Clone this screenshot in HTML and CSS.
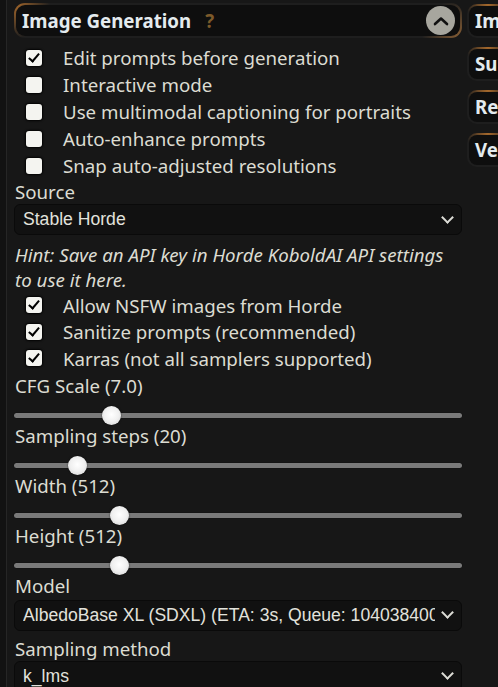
FILE: index.html
```html
<!DOCTYPE html>
<html>
<head>
<meta charset="utf-8">
<link rel="stylesheet" href="styles.css">
</head>
<body>
<div class="page">
  <div class="rail"></div>
  <div class="panel">
    <div class="drawer-head">
      <span class="title">Image Generation</span>
      <span class="help">?</span>
      <span class="toggle">
        <svg width="16" height="10" viewBox="0 0 16 10"><path d="M2 8 L8 2.5 L14 8" fill="none" stroke="#111" stroke-width="2.6" stroke-linecap="round" stroke-linejoin="round"/></svg>
      </span>
    </div>
    <div class="checks">
      <label class="check"><span class="box on"></span>Edit prompts before generation</label>
      <label class="check"><span class="box"></span>Interactive mode</label>
      <label class="check"><span class="box"></span>Use multimodal captioning for portraits</label>
      <label class="check"><span class="box"></span>Auto-enhance prompts</label>
      <label class="check"><span class="box"></span>Snap auto-adjusted resolutions</label>
    </div>
    <div class="label">Source</div>
    <div class="select"><span class="val">Stable Horde</span><span class="chev"></span></div>
    <div class="hint">Hint: Save an API key in Horde KoboldAI API settings to use it here.</div>
    <div class="checks tight">
      <label class="check"><span class="box on"></span>Allow NSFW images from Horde</label>
      <label class="check"><span class="box on"></span>Sanitize prompts (recommended)</label>
      <label class="check"><span class="box on"></span>Karras (not all samplers supported)</label>
    </div>
    <div class="label">CFG Scale (7.0)</div>
    <div class="slider"><span class="track"></span><span class="thumb" style="left:88px"></span></div>
    <div class="label">Sampling steps (20)</div>
    <div class="slider"><span class="track"></span><span class="thumb" style="left:54px"></span></div>
    <div class="label">Width (512)</div>
    <div class="slider"><span class="track"></span><span class="thumb" style="left:96px"></span></div>
    <div class="label">Height (512)</div>
    <div class="slider"><span class="track"></span><span class="thumb" style="left:96px"></span></div>
    <div class="label">Model</div>
    <div class="select model"><span class="val">AlbedoBase XL (SDXL) (ETA: 3s, Queue: 10403840000 max)</span><span class="chev"></span></div>
    <div class="label gap">Sampling method</div>
    <div class="select"><span class="val">k_lms</span><span class="chev"></span></div>
  </div>
  <div class="tabs">
    <div class="tab">Im</div>
    <div class="tab">Su</div>
    <div class="tab">Re</div>
    <div class="tab">Ve</div>
  </div>
</div>
</body>
</html>
```
FILE: styles.css
```css
html, body {
  margin: 0;
  padding: 0;
  background: #171717;
  overflow: hidden;
}
.page {
  display: flex;
  width: 498px;
  height: 687px;
  font-family: "Noto Sans", sans-serif;
  font-size: 18.7px;
  color: #dcdcd2;
}
.rail {
  width: 6px;
  flex: none;
  background: #121212;
  border-right: 1px solid #262626;
}
.panel {
  width: 448px;
  flex: none;
  margin-left: 7px;
  padding-top: 3px;
  display: flex;
  flex-direction: column;
}
.panel > * {
  flex-shrink: 0;
}
.drawer-head {
  height: 31px;
  display: flex;
  align-items: center;
  padding: 0 5px 0 6px;
  border-radius: 11px;
  border: 2px solid transparent;
  background:
    linear-gradient(#0e0e0e, #0e0e0e) padding-box,
    radial-gradient(circle at 0 0, #a86a2c 0, rgba(168,106,44,0) 36px) border-box,
    radial-gradient(circle at 100% 100%, #8a6036 0, rgba(138,96,54,0) 40px) border-box,
    #1e1e1e border-box;
}
.title {
  font-weight: 700;
  font-size: 18.7px;
  color: #e4ebee;
}
.help {
  margin-left: 14px;
  font-weight: 700;
  color: #7c5a2a;
}
.toggle {
  margin-left: auto;
  width: 29px;
  height: 29px;
  border-radius: 50%;
  background: #a7a69e;
  display: flex;
  align-items: center;
  justify-content: center;
}
.checks {
  display: flex;
  flex-direction: column;
  padding-top: 6px;
  padding-bottom: 1px;
}
.check {
  display: flex;
  align-items: center;
  height: 27px;
  flex-shrink: 0;
  padding-left: 12px;
  white-space: nowrap;
}
.checks.tight { padding-top: 0; padding-bottom: 2px; }
.checks.tight .check { height: 26.5px; }
.box {
  width: 16px;
  height: 16px;
  flex: none;
  border-radius: 3px;
  background: #f4f4f0;
  box-shadow: 0 0 2px 1px rgba(0,0,0,0.9);
  margin-right: 21px;
  position: relative;
}
.box.on::after {
  content: "";
  position: absolute;
  left: 5px;
  top: 1px;
  width: 4px;
  height: 9px;
  border: solid #000;
  border-width: 0 2.6px 2.6px 0;
  transform: rotate(40deg);
}
.label {
  line-height: 24px;
  padding-left: 1px;
  white-space: nowrap;
}
.label.gap { margin-top: -1px; }
.select {
  height: 29px;
  margin-bottom: 7px;
  border-radius: 6px;
  background: #111111;
  border: 1px solid #0a0a0a;
  display: flex;
  align-items: center;
  padding: 0 8px 0 8px;
  font-family: "Liberation Sans", Arial, sans-serif;
  font-size: 17.6px;
  color: #e2e2dc;
  overflow: hidden;
}
.select.model { margin-top: 2px; }
.val {
  flex: 1;
  overflow: hidden;
  white-space: nowrap;
}
.chev {
  width: 7px;
  height: 7px;
  margin: -5px 1px 0 8px;
  border: solid #dcdcd6;
  border-width: 0 2px 2px 0;
  transform: rotate(45deg);
  flex: none;
}
.hint {
  font-style: italic;
  line-height: 25px;
  padding-left: 1px;
}
.slider {
  position: relative;
  height: 26px;
  display: flex;
  align-items: center;
  padding-top: 10px;
  box-sizing: border-box;
}
.track {
  flex: 1;
  height: 5px;
  border-radius: 3px;
  background: #7a7a7a;
  box-shadow: 0 0 1px #000;
}
.thumb {
  position: absolute;
  top: 8.5px;
  width: 19px;
  height: 19px;
  border-radius: 50%;
  background: radial-gradient(circle at 50% 45%, #ffffff 0, #f0f0f0 50%, #cfcfcf 100%);
  box-shadow: 0 0 2px rgba(0,0,0,0.6);
}
.tabs {
  margin-left: 5px;
  padding-top: 4px;
  display: flex;
  flex-direction: column;
  gap: 9px;
}
.tab {
  width: 60px;
  height: 30px;
  flex-shrink: 0;
  border-radius: 10px;
  border: 2px solid transparent;
  background:
    linear-gradient(#0e0e0e, #0e0e0e) padding-box,
    radial-gradient(circle at 30% 0, #a86a2c 0, rgba(168,106,44,0) 22px) border-box,
    #1e1e1e border-box;
  font-weight: 700;
  color: #e4ebee;
  padding-left: 6px;
  line-height: 30px;
}
```
